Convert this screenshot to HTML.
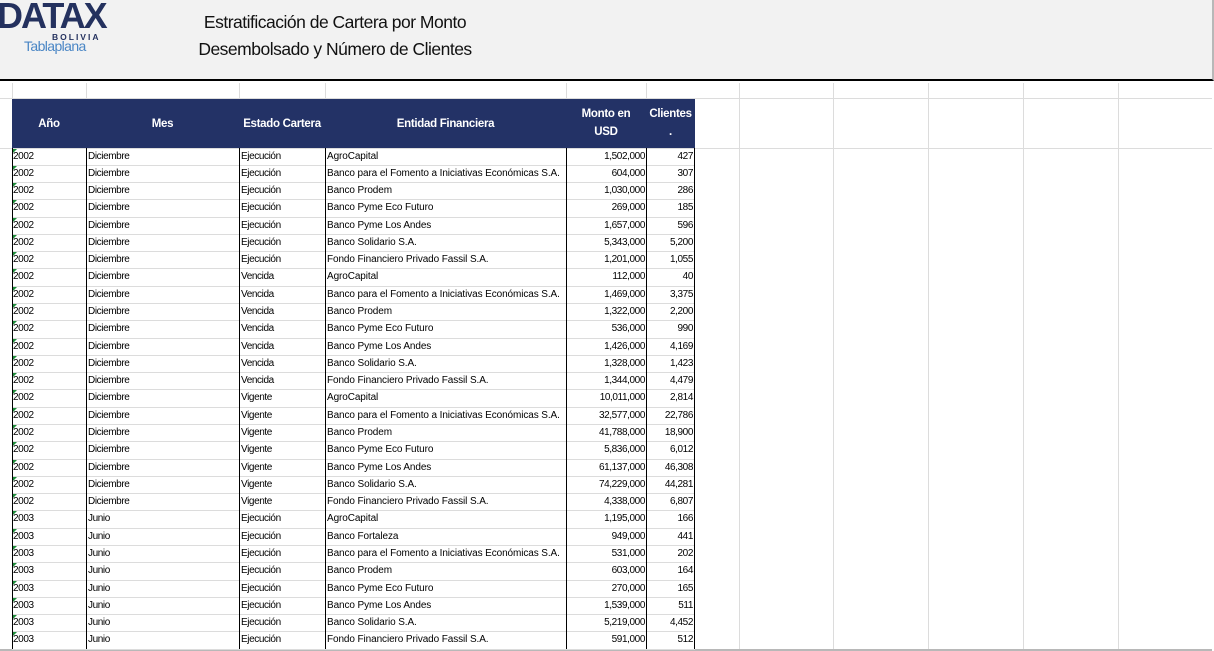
<!DOCTYPE html>
<html><head><meta charset="utf-8"><style>
*{margin:0;padding:0;box-sizing:border-box}
body{width:1214px;height:651px;overflow:hidden;background:#fff;font-family:"Liberation Sans",sans-serif;position:relative}
#top{position:absolute;left:0;top:0;width:1214px;height:81px;background:#f2f2f2;border-bottom:2px solid #000;border-right:2px solid #b8b8b8}
.logo{position:absolute;left:-3px;top:-5px;font-size:36px;font-weight:bold;color:#24315e;letter-spacing:-2px;font-family:"Liberation Sans",sans-serif}
.bol{position:absolute;left:52px;top:32px;font-size:8.5px;font-weight:bold;color:#24315e;letter-spacing:2px}
.tp{position:absolute;left:24px;top:38px;font-size:14px;color:#4a86c5;letter-spacing:-0.6px}
.title{position:absolute;left:185px;top:9px;font-size:17.5px;line-height:27px;color:#111;text-align:center;width:300px;letter-spacing:-0.5px;white-space:nowrap}
.vg{position:absolute;top:83px;width:1px;height:566px;background:#dcdcdc}
.hg{position:absolute;left:0;height:1px;width:1212px;background:#dcdcdc}
#hdr{position:absolute;left:12px;top:99px;height:49px;width:683px;background:#233266;color:#fff;font-size:11.5px;font-weight:bold;letter-spacing:-0.3px}
#hdr div{position:absolute;text-align:center;line-height:18px}
.row{position:absolute;left:12px;width:683px;height:17.3px;font-size:10px;border-bottom:1px solid #dcdcdc;letter-spacing:-0.4px}
.row span{position:absolute;top:2px;white-space:nowrap}
.vb{position:absolute;top:148px;height:501px;width:1px;background:#000}
.tri{position:absolute;left:0;top:0;width:0;height:0;border-top:5px solid #1e8c3a;border-right:5px solid transparent}
</style></head><body>
<div id="top">
<div class="logo">DATAX</div>
<div class="bol">BOLIVIA</div>
<div class="tp">Tablaplana</div>
<div class="title">Estratificación de Cartera por Monto<br>Desembolsado y Número de Clientes</div>
</div>
<div class="vg" style="left:12px"></div><div class="vg" style="left:86px;height:16px"></div><div class="vg" style="left:239px;height:16px"></div><div class="vg" style="left:325px;height:16px"></div><div class="vg" style="left:566px;height:16px"></div><div class="vg" style="left:646px;height:16px"></div>
<div class="vg" style="left:739px"></div><div class="vg" style="left:833px"></div><div class="vg" style="left:928px"></div><div class="vg" style="left:1023px"></div><div class="vg" style="left:1118px"></div>
<div class="hg" style="top:98px"></div><div class="hg" style="top:148px"></div><div class="hg" style="top:649px;background:#b8b8b8;height:2px"></div>
<div id="hdr">
<div style="left:0;width:74px;top:16px">Año</div>
<div style="left:74px;width:153px;top:16px">Mes</div>
<div style="left:227px;width:86px;top:16px">Estado Cartera</div>
<div style="left:313px;width:241px;top:16px">Entidad Financiera</div>
<div style="left:554px;width:80px;top:6px">Monto en<br>USD</div>
<div style="left:634px;width:49px;top:6px">Clientes<br>.</div>
</div>
<div id="rows"></div>
<div class="vb" style="left:12px"></div><div class="vb" style="left:86px"></div><div class="vb" style="left:239px"></div><div class="vb" style="left:325px"></div><div class="vb" style="left:566px"></div><div class="vb" style="left:646px"></div><div class="vb" style="left:694px"></div>
<script>
var d=[
["2002","Diciembre","Ejecución","AgroCapital","1,502,000","427"],
["2002","Diciembre","Ejecución","Banco para el Fomento a Iniciativas Económicas S.A.","604,000","307"],
["2002","Diciembre","Ejecución","Banco Prodem","1,030,000","286"],
["2002","Diciembre","Ejecución","Banco Pyme Eco Futuro","269,000","185"],
["2002","Diciembre","Ejecución","Banco Pyme Los Andes","1,657,000","596"],
["2002","Diciembre","Ejecución","Banco Solidario S.A.","5,343,000","5,200"],
["2002","Diciembre","Ejecución","Fondo Financiero Privado Fassil S.A.","1,201,000","1,055"],
["2002","Diciembre","Vencida","AgroCapital","112,000","40"],
["2002","Diciembre","Vencida","Banco para el Fomento a Iniciativas Económicas S.A.","1,469,000","3,375"],
["2002","Diciembre","Vencida","Banco Prodem","1,322,000","2,200"],
["2002","Diciembre","Vencida","Banco Pyme Eco Futuro","536,000","990"],
["2002","Diciembre","Vencida","Banco Pyme Los Andes","1,426,000","4,169"],
["2002","Diciembre","Vencida","Banco Solidario S.A.","1,328,000","1,423"],
["2002","Diciembre","Vencida","Fondo Financiero Privado Fassil S.A.","1,344,000","4,479"],
["2002","Diciembre","Vigente","AgroCapital","10,011,000","2,814"],
["2002","Diciembre","Vigente","Banco para el Fomento a Iniciativas Económicas S.A.","32,577,000","22,786"],
["2002","Diciembre","Vigente","Banco Prodem","41,788,000","18,900"],
["2002","Diciembre","Vigente","Banco Pyme Eco Futuro","5,836,000","6,012"],
["2002","Diciembre","Vigente","Banco Pyme Los Andes","61,137,000","46,308"],
["2002","Diciembre","Vigente","Banco Solidario S.A.","74,229,000","44,281"],
["2002","Diciembre","Vigente","Fondo Financiero Privado Fassil S.A.","4,338,000","6,807"],
["2003","Junio","Ejecución","AgroCapital","1,195,000","166"],
["2003","Junio","Ejecución","Banco Fortaleza","949,000","441"],
["2003","Junio","Ejecución","Banco para el Fomento a Iniciativas Económicas S.A.","531,000","202"],
["2003","Junio","Ejecución","Banco Prodem","603,000","164"],
["2003","Junio","Ejecución","Banco Pyme Eco Futuro","270,000","165"],
["2003","Junio","Ejecución","Banco Pyme Los Andes","1,539,000","511"],
["2003","Junio","Ejecución","Banco Solidario S.A.","5,219,000","4,452"],
["2003","Junio","Ejecución","Fondo Financiero Privado Fassil S.A.","591,000","512"]];
var h="";
d.forEach(function(r,i){var t=148.5+i*17.28;
h+='<div class="row" style="top:'+t+'px"><div class="tri"></div><span style="left:1px">'+r[0]+'</span><span style="left:76px">'+r[1]+'</span><span style="left:229px">'+r[2]+'</span><span style="left:315px;letter-spacing:-0.1px">'+r[3]+'</span><span style="right:50px">'+r[4]+'</span><span style="right:2px">'+r[5]+'</span></div>';});
document.getElementById("rows").innerHTML=h;
</script>
</body></html>
